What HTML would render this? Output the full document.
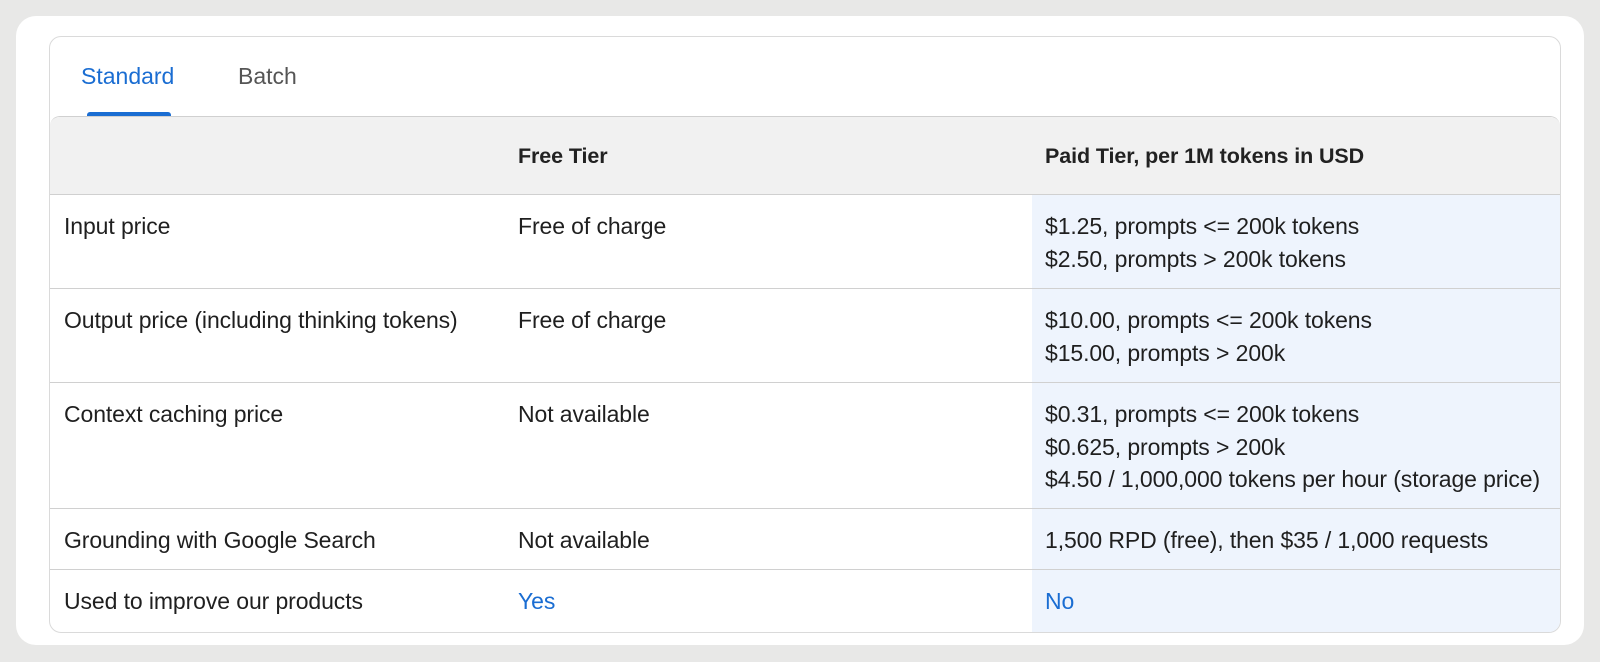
<!DOCTYPE html>
<html><head><meta charset="utf-8"><style>
*{box-sizing:border-box;margin:0;padding:0}
body{width:1600px;height:662px;background:#e8e8e7;font-family:"Liberation Sans",Arial,sans-serif;position:relative;overflow:hidden}
.panel{position:absolute;left:16px;top:16px;width:1568px;height:629px;background:#fff;border-radius:20px}
.card{position:absolute;left:49px;top:36px;width:1512px;height:597px;border:1px solid #dadada;border-radius:12px;background:#fff;overflow:hidden}
.tab{position:absolute;top:26px;font-size:23px}
.t1{left:31px;color:#1a6dd2}
.t2{left:188px;color:#555}
.ul{position:absolute;left:37px;top:75px;width:84px;height:4px;background:#1a6dd2;border-radius:3px 3px 0 0}
.tbl{position:absolute;left:0;top:79px;width:1510px;height:518px;border-top:1px solid #d0d0d0;border-radius:10px 10px 0 0;overflow:hidden}
.row{position:absolute;left:0;width:100%;border-bottom:1px solid #d0d0d0}
.paid{position:absolute;left:982px;top:0;bottom:0;right:0;background:#eef4fd}
.c{position:absolute;font-size:23px;color:#1f1f1f;line-height:32.5px;letter-spacing:-0.1px}
.c1{left:14px}.c2{left:468px}.c3{left:995px}
.h .c{font-weight:bold;color:#222;font-size:21.5px}
.blue{color:#1a6dd2}
</style></head><body>
<div class="panel"></div>
<div class="card">
<div class="tab t1">Standard</div><div class="tab t2">Batch</div><div class="ul"></div>
<div class="tbl">
<div class="row h" style="top:0;height:78px;background:#f1f1f1"><div class="c c2" style="top:23px">Free Tier</div><div class="c c3" style="top:23px">Paid Tier, per 1M tokens in USD</div></div>
<div class="row" style="top:78px;height:94px"><div class="paid"></div><div class="c c1" style="top:15px">Input price</div><div class="c c2" style="top:15px">Free of charge</div><div class="c c3" style="top:15px">$1.25, prompts &lt;= 200k tokens<br>$2.50, prompts &gt; 200k tokens</div></div>
<div class="row" style="top:172px;height:94px"><div class="paid"></div><div class="c c1" style="top:15px">Output price (including thinking tokens)</div><div class="c c2" style="top:15px">Free of charge</div><div class="c c3" style="top:15px">$10.00, prompts &lt;= 200k tokens<br>$15.00, prompts &gt; 200k</div></div>
<div class="row" style="top:266px;height:126px"><div class="paid"></div><div class="c c1" style="top:15px">Context caching price</div><div class="c c2" style="top:15px">Not available</div><div class="c c3" style="top:15px">$0.31, prompts &lt;= 200k tokens<br>$0.625, prompts &gt; 200k<br>$4.50 / 1,000,000 tokens per hour (storage price)</div></div>
<div class="row" style="top:392px;height:61px"><div class="paid"></div><div class="c c1" style="top:15px">Grounding with Google Search</div><div class="c c2" style="top:15px">Not available</div><div class="c c3" style="top:15px">1,500 RPD (free), then $35 / 1,000 requests</div></div>
<div class="row" style="top:453px;height:65px;border-bottom:none"><div class="paid"></div><div class="c c1" style="top:15px">Used to improve our products</div><div class="c c2 blue" style="top:15px">Yes</div><div class="c c3 blue" style="top:15px">No</div></div>
</div>
</div>
</body></html>
